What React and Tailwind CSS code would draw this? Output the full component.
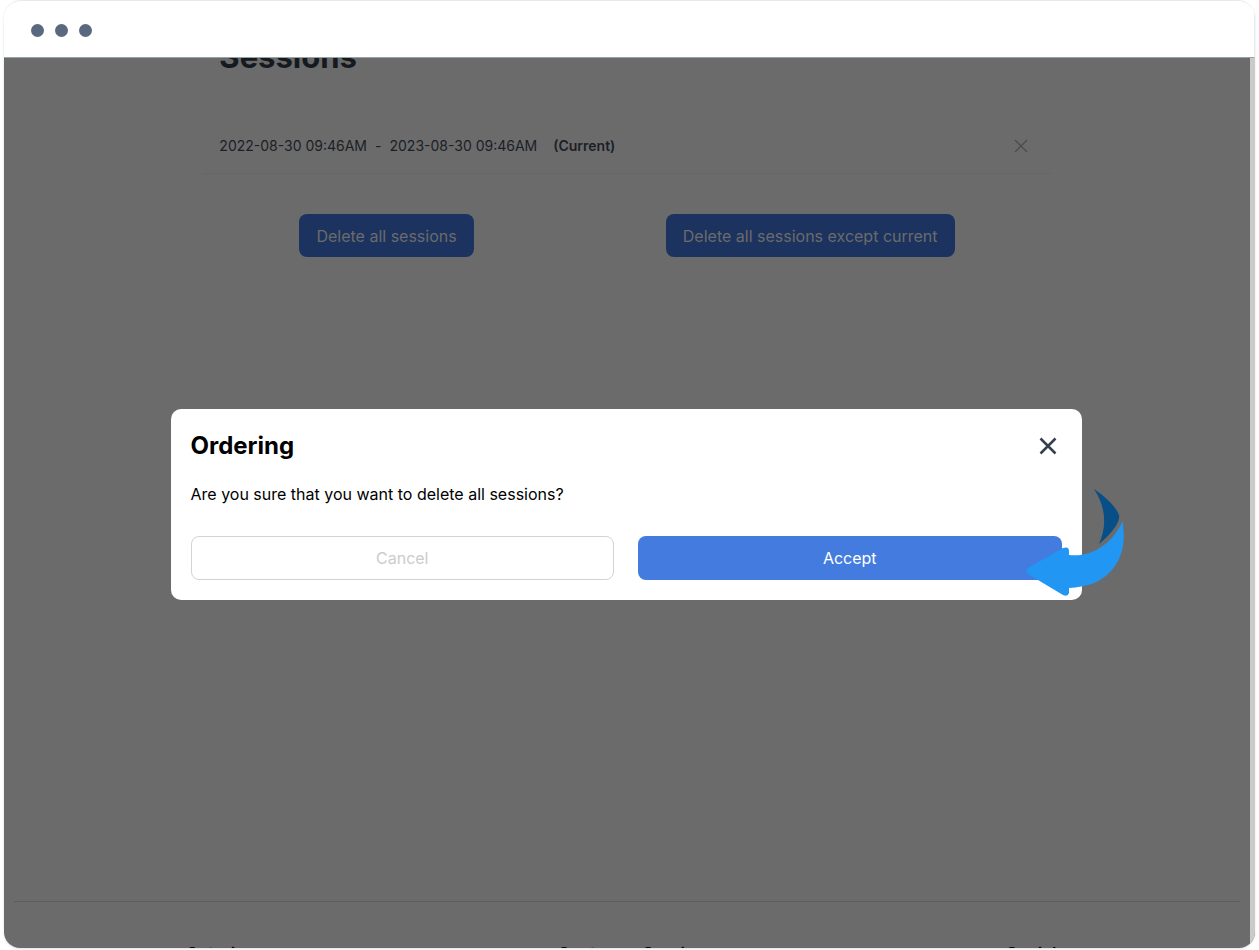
const footerColumns = ['Catering', 'Customer Service', 'Social'];

function CloseIcon({ className }) {
  return (
    <svg className={className} viewBox="0 0 24 24" fill="none" stroke="currentColor" aria-hidden="true">
      <path d="M3 3 L21 21 M21 3 L3 21" />
    </svg>
  );
}

function PointerArrow() {
  return (
    <svg
      className="pointer-events-none absolute -right-11 top-20 h-[108px] w-[100px]"
      viewBox="0 0 100 108"
      aria-hidden="true"
    >
      <path d="M68 0 C81 9 90 18 93 26 C95 34 83 47 73 55 C81 37 80 18 68 0 Z" fill="#074f86" />
      <path
        d="M96.500 32 C100 54 96 70 85 82 C74 94 60 98 43 99 L43 104 Q42 108 37 106 L2 85 Q-1 82 2 79 L37 59 Q43 57 43 62 L43 66 C68 69 88 52 96.500 32 Z"
        fill="#2196f3"
      />
    </svg>
  );
}

function ConfirmDialog() {
  return (
    <div
      role="dialog"
      aria-modal="true"
      aria-labelledby="confirm-title"
      className="relative w-full max-w-[911px] rounded-[10px] bg-white px-5 pt-[21px] pb-5"
    >
      <div className="flex items-center justify-between pr-1">
        <h2 id="confirm-title" className="text-2xl leading-8 font-bold text-black">
          Ordering
        </h2>
        <button type="button" aria-label="Close" className="text-[#344050]">
          <CloseIcon className="size-5 stroke-3" />
        </button>
      </div>
      <p className="mt-5 text-base leading-6 text-black">Are you sure that you want to delete all sessions?</p>
      <div className="mt-[30px] grid grid-cols-2 gap-6">
        <button type="button" className="h-11 rounded-lg border border-[#d3d3d3] text-base text-[#cccccc]">
          Cancel
        </button>
        <button type="button" className="h-11 rounded-lg bg-[#437bdf] text-base text-white">
          Accept
        </button>
      </div>
      <PointerArrow />
    </div>
  );
}

export default function App() {
  return (
    <div className="h-screen bg-white px-1 pb-0.5 font-['Inter',sans-serif]">
      <div className="flex h-full flex-col overflow-hidden rounded-[18px] rounded-b-2xl border-t border-[#e3eaf0] shadow">
        <div className="flex h-[57px] shrink-0 items-center gap-[11px] border-r border-b border-r-[#e3eaf0] border-b-[#93a5aa] bg-white px-[27px] pt-0.5">
          <span className="size-[13px] rounded-full bg-[#5b6980]" />
          <span className="size-[13px] rounded-full bg-[#5b6980]" />
          <span className="size-[13px] rounded-full bg-[#5b6980]" />
        </div>

        <div className="relative min-h-0 flex-1 border-r-5 border-[#cacaca] bg-[#6b6b6b]">
          <div className="flex h-full flex-col overflow-hidden">
            <main className="mx-auto w-[68%] shrink-0">
              <h1 className="-mt-5 px-4 text-[31px] leading-[38px] font-bold text-[#151a20]">Sessions</h1>
              <div className="mt-[50px] flex h-12 items-start justify-between border-b border-[#666666] px-4 text-sm leading-10 text-[#1b2026]">
                <p className="flex gap-2">
                  <span>2022-08-30 09:46AM</span>
                  <span>-</span>
                  <span>2023-08-30 09:46AM</span>
                  <strong className="ml-2 font-semibold">(Current)</strong>
                </p>
                <button type="button" aria-label="Delete session" className="flex h-10 items-center px-1.5 text-[#4a4d50]">
                  <CloseIcon className="size-4 stroke-2" />
                </button>
              </div>
              <div className="mt-10 flex justify-around">
                <button type="button" className="h-[43px] rounded-lg bg-[#1c335f] px-[17px] text-base text-[#6b6b6b]">
                  Delete all sessions
                </button>
                <button type="button" className="h-[43px] rounded-lg bg-[#1c335f] px-[17px] text-base text-[#6b6b6b]">
                  Delete all sessions except current
                </button>
              </div>
            </main>

            <footer className="mx-2.5 mt-auto h-[47px] shrink-0 overflow-hidden border-t border-[#5d5d5d]">
              <div className="mx-auto flex w-[72%] justify-between pt-10 pr-3 text-[17px] leading-6 font-semibold text-black">
                {footerColumns.map((title) => (
                  <h3 key={title}>{title}</h3>
                ))}
              </div>
            </footer>
          </div>

          <div className="absolute inset-0 flex items-center justify-center pt-0.5 pr-0.5">
            <ConfirmDialog />
          </div>
        </div>
      </div>
    </div>
  );
}
